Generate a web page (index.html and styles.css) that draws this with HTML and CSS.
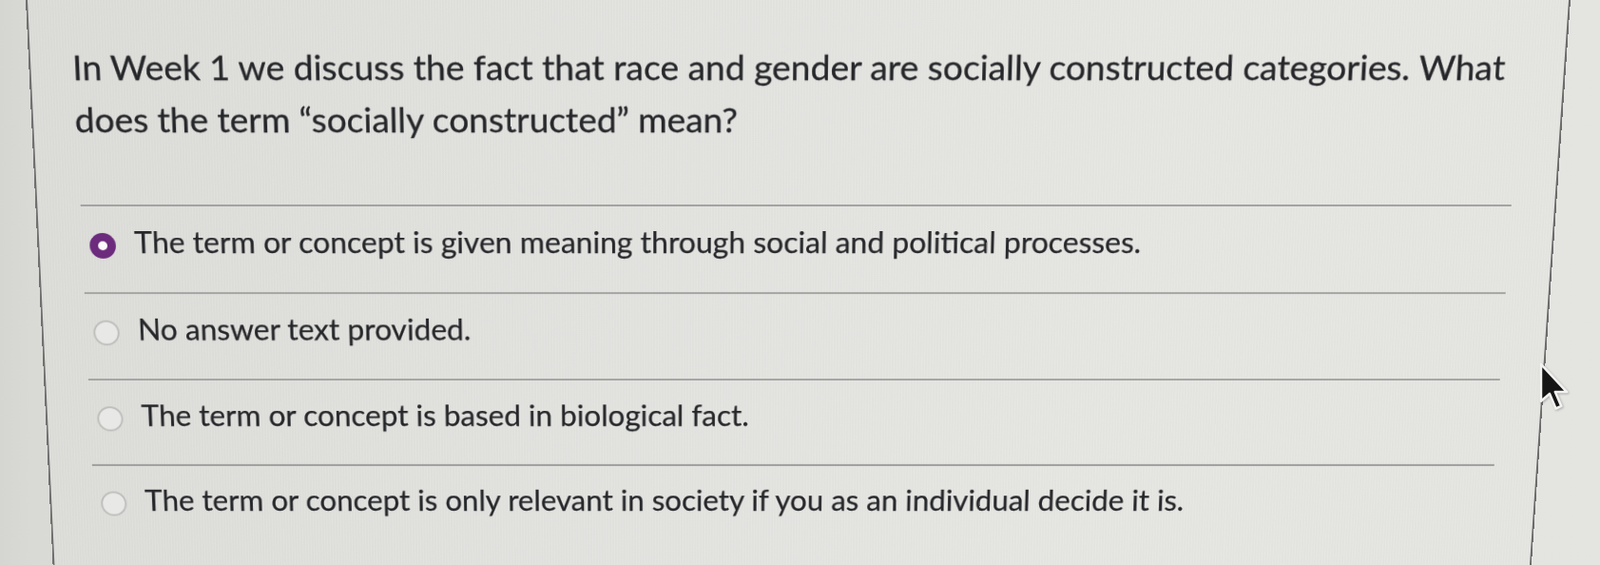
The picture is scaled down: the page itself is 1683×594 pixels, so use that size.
FILE: index.html
```html
<!DOCTYPE html>
<html lang="en">
<head>
<meta charset="utf-8">
<title>Quiz question</title>
<link rel="stylesheet" href="styles.css">
</head>
<body>
<main class="screen">
  <section class="sheet">
    <p class="question">In Week 1 we discuss the fact that race and gender are socially constructed categories. What does the term “socially constructed” mean?</p>
    <ul class="answers">
      <li class="answer is-selected"><span class="radio"></span><span class="label">The term or concept is given meaning through social and political processes.</span></li>
      <li class="answer"><span class="radio"></span><span class="label">No answer text provided.</span></li>
      <li class="answer"><span class="radio"></span><span class="label">The term or concept is based in biological fact.</span></li>
      <li class="answer"><span class="radio"></span><span class="label">The term or concept is only relevant in society if you as an individual decide it is.</span></li>
    </ul>
  </section>
  <svg class="cursor" width="39" height="57" viewBox="-3 -3 30 44" aria-hidden="true">
    <path d="M0 0 L0 30 L7 24 L12 36 L16.5 34 L11.5 22.5 L21 22.5 Z" fill="#151515" stroke="#f2f2f0" stroke-width="2" stroke-linejoin="round"/>
  </svg>
</main>
</body>
</html>
```
FILE: styles.css
```css
html, body {
  margin: 0;
  height: 100%;
  overflow: hidden;
}

body {
  background: #d8d8d5;
  font-family: Lato, "Open Sans", "Liberation Sans", sans-serif;
}

.screen {
  position: relative;
  width: 1683px;
  height: 594px;
  overflow: hidden;
  background: linear-gradient(90deg, #d5d5d2 0%, #d9d9d6 2%, #e2e2df 60%, #e4e4e1 100%);
}

.sheet {
  box-sizing: border-box;
  width: 1625px;
  height: 660px;
  margin-left: 27px;
  border-left: 2px solid #707070;
  border-right: 2px solid #6c6c6c;
  background:
    repeating-linear-gradient(90deg, rgba(255,255,255,0.05) 0 1px, rgba(0,0,0,0.01) 1px 3px),
    linear-gradient(100deg, #dcdcd9 0%, #e2e2df 35%, #e6e6e3 70%, #e5e5e2 100%);
  transform-origin: 666px 0;
  transform: perspective(1000px) rotateX(-4.13deg);
  overflow: hidden;
}

.question {
  margin: 43px 10px 64px 44px;
  font-size: 37.4px;
  line-height: 56px;
  font-weight: 400;
  color: #26272a;
  -webkit-text-stroke: 0.3px #26272a;
}

.answers {
  list-style: none;
  margin: 0 46px;
  padding: 0;
}

.answer {
  display: flex;
  align-items: flex-start;
  border-top: 2.5px solid #a2a2a1;
  padding: 19px 0 35px 8px;
}

.radio {
  flex: none;
  box-sizing: border-box;
  width: 28px;
  height: 28px;
  margin-top: 9.6px;
  border-radius: 50%;
  border: 2px solid #bebebc;
  background: #e8e8e6;
}

.is-selected .radio {
  border: 9px solid #6c2b7d;
  background: #fbfbfb;
}

.label {
  margin-left: 20px;
  font-size: 32.5px;
  line-height: 40px;
  color: #26272a;
  -webkit-text-stroke: 0.25px #26272a;
}

.cursor {
  position: absolute;
  left: 1617px;
  top: 379px;
  filter: drop-shadow(1px 1px 1px rgba(0,0,0,0.25));
}
```
